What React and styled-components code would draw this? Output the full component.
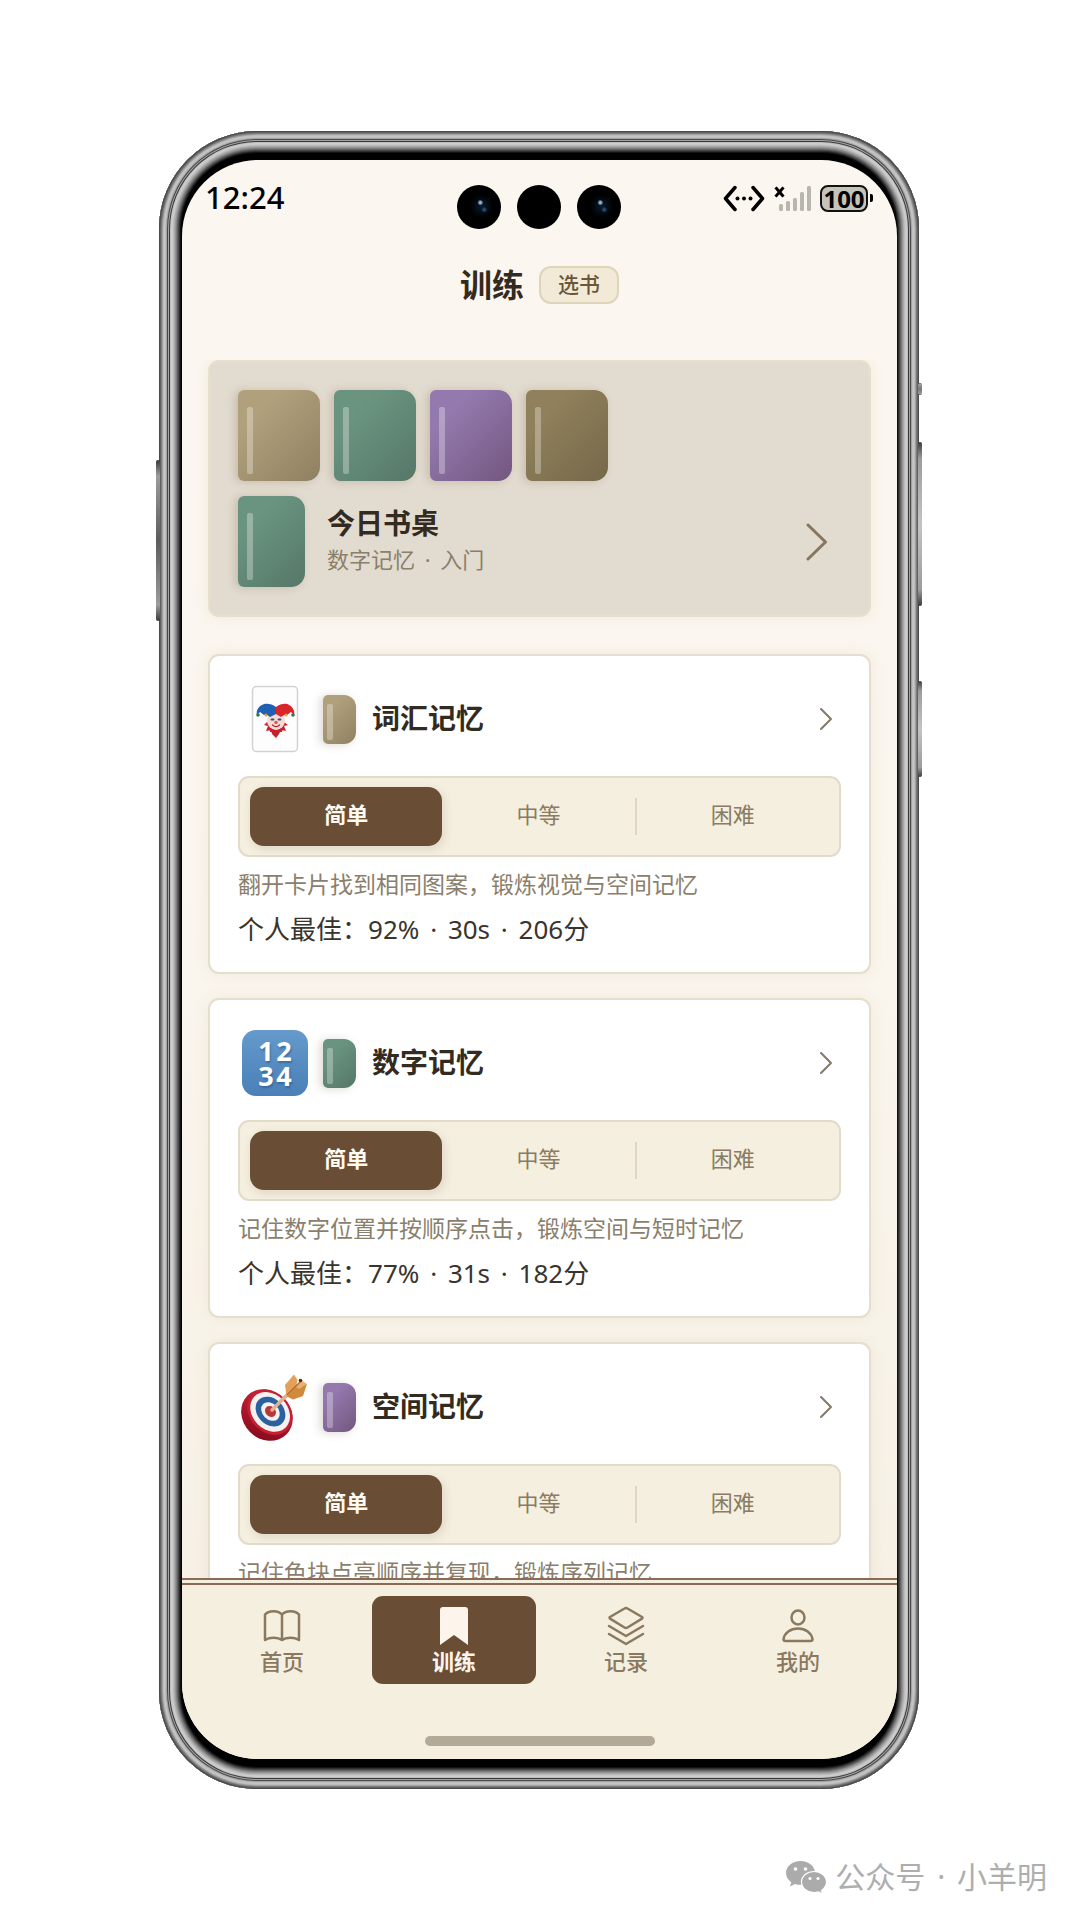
import { useState } from 'react';
import styled, { createGlobalStyle } from 'styled-components';

// ─────────────────────────────────────────────────────
// 全局样式
// ─────────────────────────────────────────────────────

const GlobalStyle = createGlobalStyle`
  * {
    box-sizing: border-box;
  }

  body {
    margin: 0;
    background: #ffffff;
    font-family: 'Noto Sans', 'Noto Sans CJK SC', sans-serif;
    color: #332a20;
  }

  button {
    font-family: inherit;
    border: none;
    background: none;
    padding: 0;
    cursor: pointer;
  }

  h1, h2, p {
    margin: 0;
  }

  svg {
    display: block;
  }
`;

// ─────────────────────────────────────────────────────
// 手机外壳
// ─────────────────────────────────────────────────────

// 金属边框由外到内，每个颜色占 1px
const METAL = [
  '#4a4a4a', '#626262', '#7c7c7c', '#a0a0a0', '#bcbcbc', '#c6c6c6', '#bebebe', '#a2a2a2',
  '#4a4a4a', '#a4a4a4', '#3a3a3a', '#bebebe', '#cecece', '#c8c8c8', '#bababa', '#a8a8a8',
  '#949494', '#7c7c7c', '#626262', '#484848', '#2c2c2c', '#121212',
];
const metalRings = METAL.map((color, i) => `inset 0 0 0 ${i + 1}px ${color}`).join(', ');

const Stage = styled.div`
  display: flex;
  flex-direction: column;
  height: 100vh;
  padding: 131px 161px 0 159px;
`;

const Phone = styled.div`
  position: relative;
  flex: 1;
  min-height: 0;
  display: flex;
  padding: 29px 22px 30px 23px;
  border-radius: 98px;
  background: #000000;
  box-shadow: ${metalRings};
`;

const SideKey = styled.span`
  position: absolute;
  ${props => props.$side}: -3px;
  top: ${props => props.$top}px;
  width: 4px;
  height: ${props => props.$length}px;
  border-radius: 2px;
  background: linear-gradient(#3a3a3a, #9c9c9c 10%, ${props => props.$tone} 50%, #9c9c9c 90%, #3a3a3a);
`;

const Screen = styled.div`
  flex: 1;
  min-width: 0;
  display: flex;
  flex-direction: column;
  overflow: hidden;
  border-radius: 76px;
  background: linear-gradient(#fbf6f0, #faf5ed 50%, #f5efe3);
`;

// ─────────────────────────────────────────────────────
// 状态栏
// ─────────────────────────────────────────────────────

const StatusBar = styled.div`
  display: grid;
  grid-template-columns: 1fr auto 1fr;
  align-items: start;
  padding: 17px 24px 0 23px;
`;

const Time = styled.time`
  font-size: 31px;
  line-height: 40px;
  font-weight: 500;
  color: #000000;
`;

const Cameras = styled.div`
  display: flex;
  gap: 16px;
  padding-top: 8px;
`;

const Lens = styled.span`
  width: 44px;
  height: 44px;
  border-radius: 50%;
  background: ${props => props.$glint
    ? 'radial-gradient(circle at 53% 40%, #8fb4d8 0 1px, transparent 3px), radial-gradient(circle at 62% 56%, #2b4a70 0 1px, transparent 3px), radial-gradient(circle at 56% 48%, #081a2e, #000000 35%)'
    : '#000000'};
`;

const StatusIcons = styled.div`
  display: flex;
  justify-content: flex-end;
  align-items: center;
  gap: 9px;
  height: 42px;
`;

const Battery = styled.span`
  display: flex;
  align-items: center;
  gap: 2px;

  &::after {
    content: '';
    width: 3px;
    height: 8px;
    border-radius: 0 2px 2px 0;
    background: #000000;
  }
`;

const BatteryLevel = styled.span`
  width: 48px;
  height: 27px;
  border: 2px solid #111111;
  border-radius: 8px;
  background: #c6c3bd;
  font-size: 24px;
  line-height: 23px;
  font-weight: 700;
  text-align: center;
  color: #000000;
`;

function StatusRow() {
  return (
    <StatusBar>
      <Time>12:24</Time>
      <Cameras>
        <Lens $glint />
        <Lens />
        <Lens $glint />
      </Cameras>
      <StatusIcons>
        <svg width="42" height="27" viewBox="0 0 42 27" fill="none" stroke="#000" strokeWidth="3.500" strokeLinecap="round" strokeLinejoin="round">
          <path d="M12 2.500 2.500 13.500 12 24.500M30 2.500l9.500 11L30 24.500" />
          <g fill="#000" stroke="none">
            <circle cx="14.500" cy="13.500" r="2" />
            <circle cx="21" cy="13.500" r="2" />
            <circle cx="27.500" cy="13.500" r="2" />
          </g>
        </svg>
        <svg width="37" height="27" viewBox="0 0 37 27">
          <path d="m2.500 3.500 6 7m0-7-6 7" stroke="#000" strokeWidth="3" strokeLinecap="square" />
          <g fill="#b9b5af">
            <rect x="5" y="19" width="4" height="7" rx="1.500" />
            <rect x="12" y="16" width="4" height="10" rx="1.500" />
            <rect x="19" y="13" width="4" height="13" rx="1.500" />
            <rect x="26" y="7" width="4" height="19" rx="1.500" />
            <rect x="33" y="1" width="4" height="25" rx="1.500" />
          </g>
        </svg>
        <Battery>
          <BatteryLevel>100</BatteryLevel>
        </Battery>
      </StatusIcons>
    </StatusBar>
  );
}

// ─────────────────────────────────────────────────────
// 书本：大小和颜色由 props 决定
// ─────────────────────────────────────────────────────

const COVERS = {
  sand: ['#b0a07c', '#8f8061'],
  green: ['#6a9480', '#557768'],
  purple: ['#9379ae', '#73577f'],
  olive: ['#90805b', '#75684a'],
};

const Book = styled.span`
  flex: none;
  display: block;
  width: ${props => props.$width}px;
  height: ${props => props.$height}px;
  padding: ${props => (props.$small ? '9px 0 0 4px' : '17px 0 0 9px')};
  border-radius: ${props => (props.$small ? '5px 12px 12px 5px' : '6px 14px 14px 6px')};
  background: linear-gradient(135deg, ${props => COVERS[props.$cover][0]} 25%, ${props => COVERS[props.$cover][1]});
  box-shadow: -3px 1px 9px rgba(100, 80, 60, 0.22);

  /* 书脊上的高光条 */
  &::before {
    content: '';
    display: block;
    width: 6px;
    height: ${props => (props.$small ? 36 : 67)}px;
    border-radius: 2px;
    background: rgba(255, 255, 255, 0.3);
  }
`;

// ─────────────────────────────────────────────────────
// 标题和今日书桌
// ─────────────────────────────────────────────────────

// 文字之间的分隔点
const Dot = styled.span`
  margin: 0 4px;

  &::before {
    content: '·';
  }
`;

const TitleBar = styled.header`
  display: flex;
  justify-content: center;
  align-items: center;
  gap: 15px;
  padding: 35px 0 54px;
`;

const PageTitle = styled.h1`
  font-size: 32px;
  line-height: 42px;
  font-weight: 700;
`;

const PickButton = styled.button`
  width: 80px;
  height: 38px;
  padding-bottom: 3px;
  border: 2px solid #ddd5b9;
  border-radius: 12px;
  background: #f2ead7;
  font-size: 21px;
  line-height: 30px;
  font-weight: 500;
  color: #6b5638;
`;

const Content = styled.main`
  flex: 1;
  min-height: 0;
  overflow: hidden;
  padding: 0 26px;
`;

const Desk = styled.section`
  padding: 28px;
  margin-bottom: 37px;
  border: 2px solid #e5dfcc;
  border-radius: 11px;
  background: #e2dbcf;
  box-shadow: 0 0 14px rgba(190, 160, 100, 0.12);
`;

const Shelf = styled.div`
  display: flex;
  gap: 14px;
  margin-bottom: 15px;
`;

const DeskRow = styled.div`
  display: flex;
  align-items: center;
  gap: 22px;
`;

const DeskText = styled.div`
  flex: 1;
  padding-bottom: 3px;
`;

const CardTitle = styled.h2`
  flex: 1;
  font-size: 28px;
  line-height: 38px;
  font-weight: 700;
`;

const Muted = styled.p`
  font-size: ${props => props.$size || 23}px;
  line-height: 34px;
  color: #8a7f6c;
  white-space: nowrap;
`;

const ArrowButton = styled.button`
  display: flex;
  padding: 0 ${props => (props.$large ? 13 : 8)}px;
  color: ${props => (props.$large ? '#85765f' : '#85786b')};
`;

function Arrow({ large, label }) {
  return (
    <ArrowButton $large={large} aria-label={label}>
      {large ? (
        <svg width="22" height="38" viewBox="0 0 22 38" fill="none" stroke="currentColor" strokeWidth="3" strokeLinecap="round" strokeLinejoin="round">
          <path d="m2 2 17.500 17L2 36" />
        </svg>
      ) : (
        <svg width="14" height="24" viewBox="0 0 14 24" fill="none" stroke="currentColor" strokeWidth="2" strokeLinecap="round" strokeLinejoin="round">
          <path d="m2 2 10 10L2 22" />
        </svg>
      )}
    </ArrowButton>
  );
}

function TodayDesk() {
  return (
    <Desk>
      <Shelf>
        {['sand', 'green', 'purple', 'olive'].map(cover => (
          <Book key={cover} $cover={cover} $width={82} $height={91} />
        ))}
      </Shelf>
      <DeskRow>
        <Book $cover="green" $width={67} $height={91} />
        <DeskText>
          <CardTitle>今日书桌</CardTitle>
          <Muted $size={22}>数字记忆 <Dot /> 入门</Muted>
        </DeskText>
        <Arrow large label="打开今日书桌" />
      </DeskRow>
    </Desk>
  );
}

// ─────────────────────────────────────────────────────
// 训练卡片
// ─────────────────────────────────────────────────────

const Card = styled.section`
  padding: 28px 28px 25px;
  margin-bottom: 24px;
  border: 2px solid #e4dece;
  border-radius: 11px;
  background: #ffffff;
  box-shadow: 0 0 14px rgba(190, 160, 100, 0.12);
`;

const CardHead = styled.div`
  display: flex;
  align-items: center;
  height: 70px;
  margin-bottom: 22px;
`;

const IconSlot = styled.span`
  display: flex;
  justify-content: center;
  align-items: center;
  width: 74px;
  height: 70px;
  margin-right: 11px;
`;

const HeadTitle = styled(CardTitle)`
  margin-left: 16px;
  padding-bottom: 2px;
`;

const Levels = styled.div`
  display: flex;
  align-items: center;
  padding: 9px 10px;
  margin-bottom: 10px;
  border: 2px solid #e2dbc9;
  border-radius: 11px;
  background: #f5efe0;
`;

const LevelButton = styled.button`
  flex: 1;
  height: 59px;
  padding-bottom: 7px;
  border-radius: 14px;
  font-size: 22px;
  font-weight: ${props => (props.$active ? 700 : 400)};
  color: ${props => (props.$active ? '#fffaf2' : '#8a7b62')};
  background: ${props => (props.$active ? '#694e35' : 'transparent')};
  box-shadow: ${props => (props.$active ? '2px 3px 10px rgba(105, 78, 53, 0.16)' : 'none')};
`;

const Divider = styled.span`
  width: 2px;
  height: 37px;
  background: #ddd6c5;
`;

const Best = styled.p`
  margin-top: 10px;
  font-size: 26px;
  line-height: 36px;
  color: #3a342e;
`;

function JokerIcon() {
  return (
    <svg width="74" height="70" viewBox="0 0 74 70">
      <rect x="14.500" y="2.500" width="45" height="65" rx="4" fill="#fdfdfd" stroke="#d2d2d4" strokeWidth="1.500" />
      {/* 领子 */}
      <path d="m29 38-3 3 4 1-2 5 5-1 1 4 4 4 3-4 2-4 5 1-2-5 4-1-4-3z" fill="#c8202c" />
      <ellipse cx="38" cy="37" rx="9" ry="9" fill="#f7dcd6" />
      <path d="m31 43 3 2 4 2 4-2 3-2-1 5-3 0-3 5-3-5-3 0z" fill="#c8202c" />
      {/* 帽子 */}
      <path d="M38 23c-5-4-11-4-14-2-4 2-6 6-5 10l3-3 4 3c3-1 4 1 6 2l6-3z" fill="#1f5fb4" />
      <path d="M38 23c5-4 11-4 13-2 4 2 6 6 5 10l-3-3-4 3c-2-1-4 1-6 2l-5-3z" fill="#d8262c" />
      <circle cx="20" cy="31" r="1.800" fill="#35783c" />
      <circle cx="55" cy="31" r="1.800" fill="#35783c" />
      <circle cx="28" cy="31" r="1.500" fill="#d6a63a" />
      <circle cx="48" cy="31" r="1.500" fill="#d6a63a" />
      <path d="M33.500 35.500h2m5 0h2" stroke="#344f7c" strokeWidth="1.800" strokeLinecap="round" />
      <circle cx="38" cy="38.500" r="1.800" fill="#dd5a52" />
      <path d="M34.500 41c2 2 5 2 7 0" stroke="#b5232a" strokeWidth="1.300" fill="none" strokeLinecap="round" />
    </svg>
  );
}

const NumberTile = styled.span`
  display: grid;
  grid-template-columns: 18px 18px;
  grid-auto-rows: 25px;
  place-content: center;
  place-items: center;
  width: 66px;
  height: 66px;
  border-radius: 14px;
  background: linear-gradient(#659acb, #4a7fb8);
  font-size: 27px;
  line-height: 25px;
  font-weight: 700;
  color: #ffffff;
  text-shadow: 1px 2px 2px rgba(30, 70, 120, 0.45);
`;

function NumbersIcon() {
  return (
    <NumberTile>
      <span>1</span>
      <span>2</span>
      <span>3</span>
      <span>4</span>
    </NumberTile>
  );
}

function TargetIcon() {
  return (
    <svg width="74" height="70" viewBox="0 0 74 70">
      <defs>
        <linearGradient id="rim" x1="0" y1="0" x2="0.600" y2="1">
          <stop offset="0" stopColor="#d42a3c" />
          <stop offset="1" stopColor="#8c0c1e" />
        </linearGradient>
      </defs>
      <g transform="rotate(45 30 42)">
        <ellipse cx="30" cy="43.500" rx="27.500" ry="24" fill="url(#rim)" />
        <ellipse cx="30" cy="39.500" rx="25" ry="20" fill="#c41f33" />
        <ellipse cx="30" cy="39" rx="22" ry="17.500" fill="#f4f1ef" />
        <ellipse cx="30" cy="38.500" rx="16.500" ry="13" fill="#2a62a0" />
        <ellipse cx="30" cy="38.500" rx="10.500" ry="8" fill="#f4f1ef" />
        <ellipse cx="30" cy="38.500" rx="6" ry="5" fill="#b8393c" />
      </g>
      {/* 飞镖 */}
      <path d="M34 38 58 14" stroke="#e5b08a" strokeWidth="3.500" strokeLinecap="round" />
      <path d="m47 13 9-10.500 3.500 5.500-2 9-9 7z" fill="#e3a058" />
      <path d="m49 24.500 9.500-9.500 10.500-3-4 12-10 3.500z" fill="#d08a3e" />
      <path d="m58 15 5-7 6 4-8 5z" fill="#e8b06a" />
      <path d="m49 23 13-13" stroke="#b5692a" strokeWidth="1.500" />
      <circle cx="62.500" cy="8.500" r="1.800" fill="#4b2b20" />
    </svg>
  );
}

const LEVELS = ['简单', '中等', '困难'];

function TrainingCard({ icon, cover, title, description, best }) {
  const [level, setLevel] = useState(0);

  return (
    <Card>
      <CardHead>
        <IconSlot>{icon}</IconSlot>
        <Book $small $cover={cover} $width={33} $height={49} />
        <HeadTitle>{title}</HeadTitle>
        <Arrow label={`进入${title}`} />
      </CardHead>
      <Levels>
        <LevelButton $active={level === 0} onClick={() => setLevel(0)}>{LEVELS[0]}</LevelButton>
        <LevelButton $active={level === 1} onClick={() => setLevel(1)}>{LEVELS[1]}</LevelButton>
        <Divider />
        <LevelButton $active={level === 2} onClick={() => setLevel(2)}>{LEVELS[2]}</LevelButton>
      </Levels>
      <Muted>{description}</Muted>
      {best && (
        <Best>
          个人最佳：{best[0]} <Dot /> {best[1]} <Dot /> {best[2]}
        </Best>
      )}
    </Card>
  );
}

// ─────────────────────────────────────────────────────
// 底部导航
// ─────────────────────────────────────────────────────

const BottomBar = styled.footer`
  padding: 11px 17px 13px 18px;
  border-top: 7px double #8b6b58;
  background: #f5efe0;
`;

const Nav = styled.nav`
  display: grid;
  grid-template-columns: repeat(4, 1fr);
  gap: 8px;
`;

const NavLink = styled.a`
  display: flex;
  flex-direction: column;
  align-items: center;
  height: 88px;
  padding-top: 9px;
  border-radius: 11px;
  font-size: 22px;
  line-height: 28px;
  font-weight: ${props => (props.$active ? 700 : 500)};
  text-decoration: none;
  color: ${props => (props.$active ? '#fdf5ec' : '#8a795e')};
  background: ${props => (props.$active ? '#694e35' : 'transparent')};
`;

const HomeIndicator = styled.div`
  width: 230px;
  height: 10px;
  margin: 52px auto 0;
  border-radius: 5px;
  background: #b3a999;
`;

const iconProps = {
  width: 40,
  height: 42,
  viewBox: '0 0 40 42',
  fill: 'none',
  stroke: 'currentColor',
  strokeWidth: 2.5,
  strokeLinecap: 'round',
  strokeLinejoin: 'round',
};

function Tabs() {
  return (
    <Nav>
      <NavLink href="#home">
        <svg {...iconProps}>
          <path d="M20 9.500C16.500 5 6.500 5 3 9.500V35c4-3 13-3 17 0 4-3 13-3 17 0V9.500C33.500 5 23.500 5 20 9.500zV35" />
        </svg>
        首页
      </NavLink>
      <NavLink href="#train" $active>
        <svg {...iconProps}>
          <path d="M9 2h22q3 0 3 3v35L20 30 6 40V5q0-3 3-3z" fill="currentColor" stroke="none" />
        </svg>
        训练
      </NavLink>
      <NavLink href="#history">
        <svg {...iconProps}>
          <path d="M18.500 3.500q1.500-1 3 0L36 12q1 .800 0 1.600L21.500 22.500q-1.500 1-3 0L4 13.600Q3 12.800 4 12z" />
          <path d="m3 21 17 10 17-10M3 29l17 10 17-10" />
        </svg>
        记录
      </NavLink>
      <NavLink href="#me">
        <svg {...iconProps}>
          <ellipse cx="20" cy="12.500" rx="6.500" ry="7" />
          <path d="M7.500 36q-2 0-2-2c1-6 7-10.500 14.500-10.500S33.500 28 34.500 34q0 2-2 2z" />
        </svg>
        我的
      </NavLink>
    </Nav>
  );
}

// ─────────────────────────────────────────────────────
// 公众号署名
// ─────────────────────────────────────────────────────

const Credit = styled.div`
  display: flex;
  justify-content: flex-end;
  align-items: center;
  gap: 8px;
  height: 131px;
  margin-right: -128px;
  padding-top: 44px;
  font-size: 30px;
  line-height: 40px;
  font-weight: 400;
  color: #aeaeae;
  white-space: nowrap;
`;

function WechatIcon() {
  return (
    <svg width="42" height="34" viewBox="0 0 42 34">
      <path d="M15.500 1C7.500 1 1 6.300 1 13c0 3.800 2 7 5.300 9.200L5 26.500l5-2.600c1.700.6 3.600.9 5.500.9 8 0 14.500-5.300 14.500-12S23.500 1 15.500 1z" fill="#ababab" />
      <circle cx="10.500" cy="9" r="1.800" fill="#fff" />
      <circle cx="20.500" cy="9" r="1.800" fill="#fff" />
      <path d="M29 11.500c-7 0-12.500 4.700-12.500 10.500S22 32.500 29 32.500c1.500 0 3-.2 4.300-.6l4.200 2-1-3.500c3-2 5-5 5-8.400 0-5.800-5.500-10.500-12.500-10.500z" fill="#ababab" stroke="#fff" strokeWidth="1.200" />
      <circle cx="25" cy="18.500" r="1.600" fill="#fff" />
      <circle cx="33" cy="18.500" r="1.600" fill="#fff" />
    </svg>
  );
}

// ─────────────────────────────────────────────────────
// 页面
// ─────────────────────────────────────────────────────

export default function App() {
  return (
    <>
      <GlobalStyle />
      <Stage>
        <Phone>
          <SideKey $side="left" $top={329} $length={161} $tone="#5c5c5c" />
          <SideKey $side="right" $top={252} $length={12} $tone="#777777" />
          <SideKey $side="right" $top={311} $length={164} $tone="#c4c4c4" />
          <SideKey $side="right" $top={550} $length={96} $tone="#c4c4c4" />
          <Screen>
            <StatusRow />
            <TitleBar>
              <PageTitle>训练</PageTitle>
              <PickButton>选书</PickButton>
            </TitleBar>
            <Content>
              <TodayDesk />
              <TrainingCard
                icon={<JokerIcon />}
                cover="sand"
                title="词汇记忆"
                description="翻开卡片找到相同图案，锻炼视觉与空间记忆"
                best={['92%', '30s', '206分']}
              />
              <TrainingCard
                icon={<NumbersIcon />}
                cover="green"
                title="数字记忆"
                description="记住数字位置并按顺序点击，锻炼空间与短时记忆"
                best={['77%', '31s', '182分']}
              />
              <TrainingCard
                icon={<TargetIcon />}
                cover="purple"
                title="空间记忆"
                description="记住色块点亮顺序并复现，锻炼序列记忆"
              />
            </Content>
            <BottomBar>
              <Tabs />
              <HomeIndicator />
            </BottomBar>
          </Screen>
        </Phone>
        <Credit>
          <WechatIcon />
          <span>公众号 <Dot /> 小羊明</span>
        </Credit>
      </Stage>
    </>
  );
}
